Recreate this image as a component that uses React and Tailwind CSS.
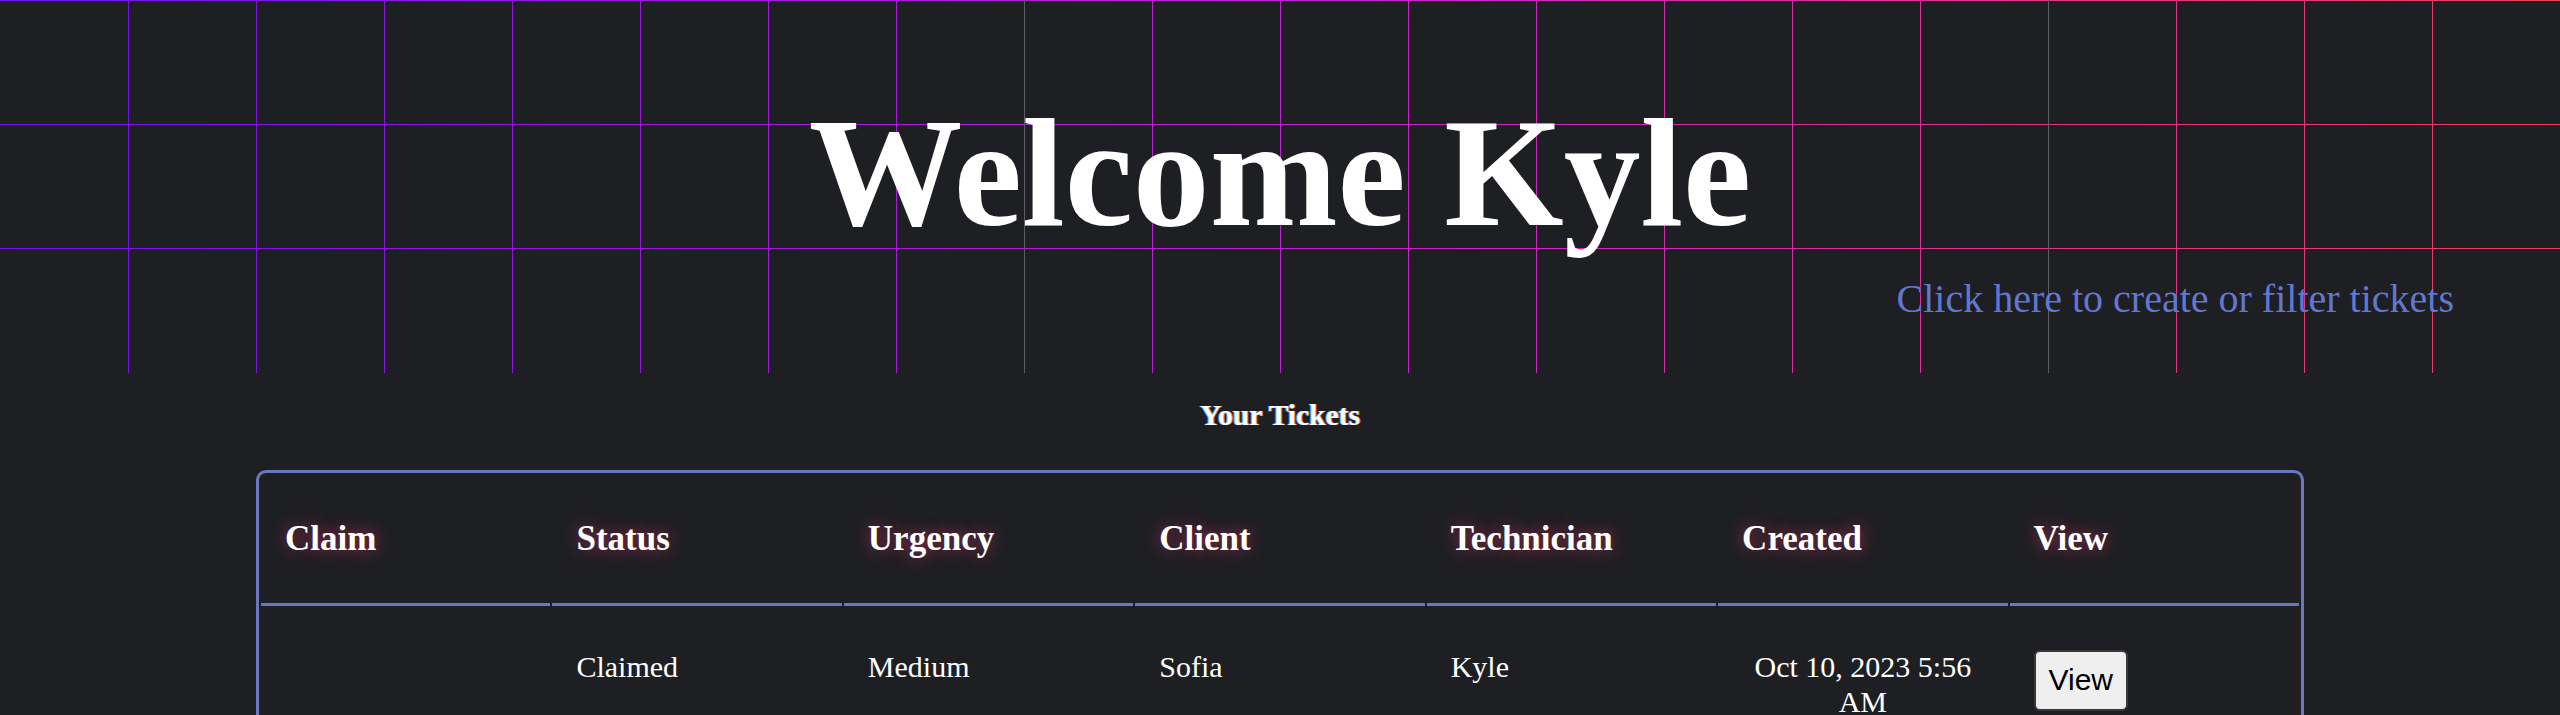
import React from "react";

const tickets = [
    {
        id: 1,
        claim: "",
        status: "Claimed",
        urgency: "Medium",
        client: "Sofia",
        technician: "Kyle",
        created: "Oct 10, 2023 5:56 AM",
    },
];

const columns = ["Claim", "Status", "Urgency", "Client", "Technician", "Created", "View"];

// Neon grid drawn behind the header
const GridBackdrop = () => {
    const verticals = Array.from({ length: 19 }, (_, i) => (i + 1) * 128);
    const dim = [1024, 2048];

    return (
        <svg
            className="absolute inset-0 h-full w-full"
            viewBox="0 0 2560 373"
            preserveAspectRatio="none"
        >
            <defs>
                <linearGradient id="neon" x1="0" y1="0" x2="2560" y2="0" gradientUnits="userSpaceOnUse">
                    <stop offset="0" stopColor="#7010f0" />
                    <stop offset="0.5" stopColor="#c21fd4" />
                    <stop offset="0.75" stopColor="#e2309a" />
                    <stop offset="1" stopColor="#f03c5a" />
                </linearGradient>
            </defs>
            {[0.5, 124.5, 248.5].map((y) => (
                <line key={y} x1="0" x2="2560" y1={y} y2={y} stroke="url(#neon)" strokeWidth="1" />
            ))}
            {verticals.map((x) => (
                <line
                    key={x}
                    x1={x + 0.5}
                    x2={x + 0.5}
                    y1="0"
                    y2="373"
                    stroke={dim.includes(x) ? "#5b5d66" : "url(#neon)"}
                    strokeWidth="1"
                />
            ))}
        </svg>
    );
};

const App = () => {
    return (
        <div className="min-h-screen bg-[#1e1f23] font-['Liberation_Serif','Times_New_Roman',serif] text-white">
            {/* Header with grid */}
            <div className="relative h-[373px]">
                <GridBackdrop />
                <div className="relative">
                    <h1 className="pt-[88px] text-center text-[153.6px] font-bold leading-[170px]">
                        Welcome Kyle
                    </h1>
                    <div className="mt-[18px] flex justify-end pr-[106px]">
                        <a href="#" className="text-[40px] leading-[46px] text-[#6277d0]">
                            Click here to create or filter tickets
                        </a>
                    </div>
                </div>
            </div>

            <h3 className="mt-[26px] text-center text-[29.5px] font-bold leading-[33px] [text-shadow:-1px_0_#3aa0ff,1px_0_#ff7a2a]">
                Your Tickets
            </h3>

            {/* Tickets table */}
            <table className="mx-auto mt-[38px] w-4/5 table-fixed border-separate border-spacing-[2px] rounded-[10px] border-[3px] border-[#6b78c0]">
                <thead>
                    <tr>
                        {columns.map((col) => (
                            <th
                                key={col}
                                className="border-b-[3px] border-[#6b78c0] px-6 py-[44px] text-left text-[35px] font-bold leading-[40px] [text-shadow:0_0_16px_rgba(255,60,120,0.6)]"
                            >
                                {col}
                            </th>
                        ))}
                    </tr>
                </thead>
                <tbody>
                    {tickets.map((t) => (
                        <tr key={t.id}>
                            <td className="px-6 pt-[42px] pb-[42px] align-top text-[30px] leading-[34.5px]">{t.claim}</td>
                            <td className="px-6 pt-[42px] pb-[42px] align-top text-[30px] leading-[34.5px]">{t.status}</td>
                            <td className="px-6 pt-[42px] pb-[42px] align-top text-[30px] leading-[34.5px]">{t.urgency}</td>
                            <td className="px-6 pt-[42px] pb-[42px] align-top text-[30px] leading-[34.5px]">{t.client}</td>
                            <td className="px-6 pt-[42px] pb-[42px] align-top text-[30px] leading-[34.5px]">{t.technician}</td>
                            <td className="px-6 pt-[42px] pb-[42px] text-center align-top text-[30px] leading-[34.5px]">{t.created}</td>
                            <td className="px-6 pt-[42px] pb-[42px] align-top">
                                <button className="rounded-md border-2 border-[#3a3a3a] bg-[#efefef] px-[13px] py-[11px] font-['Liberation_Sans',Arial,sans-serif] text-[30px] leading-[34.5px] text-black">
                                    View
                                </button>
                            </td>
                        </tr>
                    ))}
                </tbody>
            </table>
        </div>
    );
};

export default App;
